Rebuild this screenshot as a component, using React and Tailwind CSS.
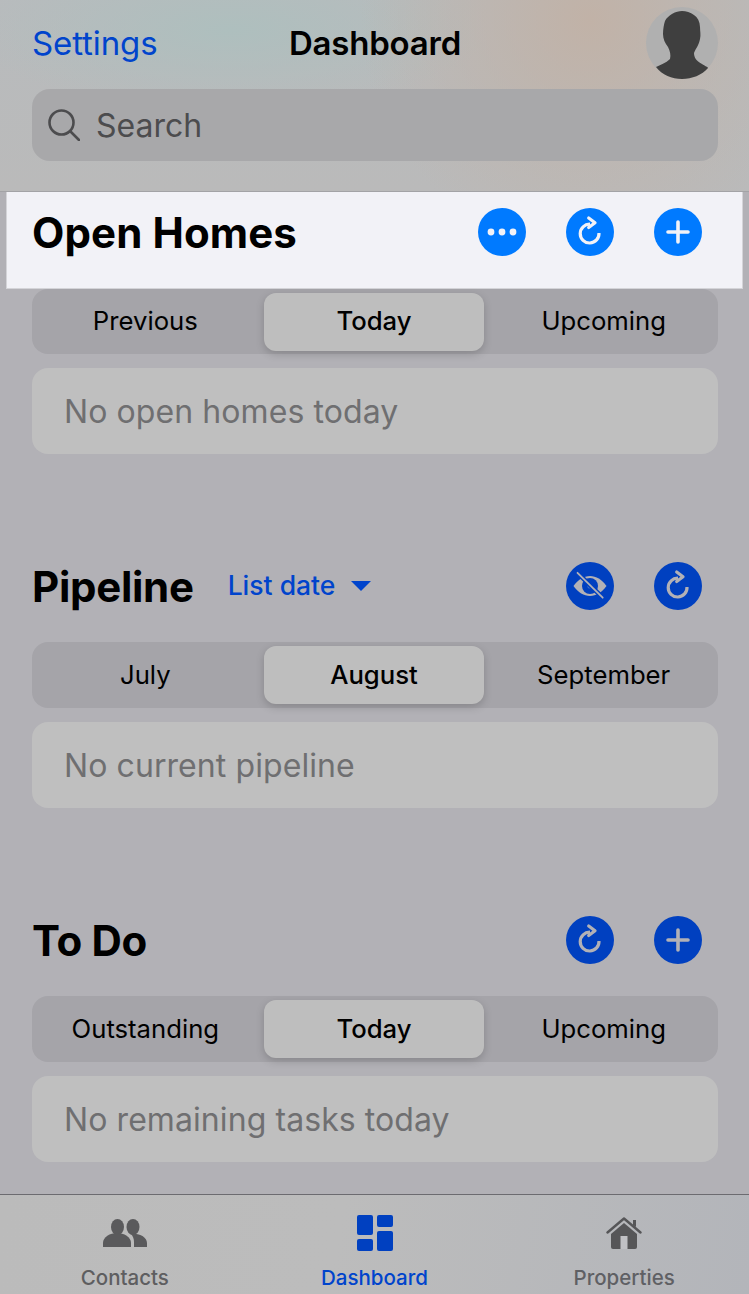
import React from 'react';

const font = { inter: "font-['Inter','Liberation_Sans',sans-serif]" };

function RefreshIcon({ color }) {
  return (
    <svg viewBox="0 0 48 48" className="w-12 h-12" fill="none" stroke={color} strokeWidth="3.2">
      <path d="M24 16.2 A9.4 9.4 0 1 0 33 25" />
      <path d="M22.7 10 L29 14.8 L22.7 19.6" strokeLinecap="round" strokeLinejoin="round" />
    </svg>
  );
}

function PlusIcon({ color }) {
  return (
    <svg viewBox="0 0 48 48" className="w-12 h-12" fill="none" stroke={color} strokeWidth="3.6" strokeLinecap="round">
      <path d="M24 14 V34 M14 24 H34" />
    </svg>
  );
}

function DotsIcon() {
  return (
    <svg viewBox="0 0 48 48" className="w-12 h-12" fill="#f2f2f7">
      <circle cx="13" cy="24" r="3.4" />
      <circle cx="24" cy="24" r="3.4" />
      <circle cx="35" cy="24" r="3.4" />
    </svg>
  );
}

function EyeOffIcon() {
  return (
    <svg viewBox="0 0 48 48" className="w-12 h-12">
      <path d="M7.5 24 C12 17.5 18 14 24 14 C30 14 36 17.5 40.5 24 C36 30.5 30 34 24 34 C18 34 12 30.5 7.5 24 Z" fill="#b2b1b6" />
      <circle cx="24" cy="24" r="8" fill="#0040c0" />
      <circle cx="24" cy="24" r="2.6" fill="#3f6ec4" />
      <path d="M11.5 10.8 L36.7 35.7" stroke="#0040c0" strokeWidth="4.6" />
      <path d="M11.5 10.8 L36.7 35.7" stroke="#b2b1b6" strokeWidth="1.8" strokeLinecap="round" />
    </svg>
  );
}

function Circle({ bg, children }) {
  return <div className={`w-12 h-12 rounded-full overflow-hidden ${bg}`}>{children}</div>;
}

function Segment({ items, height }) {
  return (
    <div className={`ml-8 mr-[31px] ${height} rounded-2xl bg-[#a5a4a9] grid grid-cols-3 items-center`}>
      {items.map((item, i) => (
        <div
          key={item}
          className={
            i === 1
              ? 'ml-[3px] mr-[5px] h-[58px] rounded-xl bg-[#bebebe] shadow-[0_3px_8px_rgba(0,0,0,0.18)] flex items-center justify-center text-[25.7px] font-medium text-black'
              : 'flex items-center justify-center text-[25.7px] font-normal text-black ' + (i === 0 ? 'pr-[2px]' : '')
          }
        >
          {item}
        </div>
      ))}
    </div>
  );
}

function EmptyBox({ text }) {
  return (
    <div className="ml-8 mr-[31px] mt-[14px] h-[86px] rounded-2xl bg-[#bfbfbf] flex items-center pl-[32px] pt-[1px] text-[32px] tracking-[0.08px] text-[#6f6f71]">
      {text}
    </div>
  );
}

function SectionHead({ title, children, extra }) {
  return (
    <div className="h-[96px] pl-8 pr-[47px] pb-4 flex items-center">
      <h2 className="text-[42px] font-bold text-black tracking-[-0.3px]">{title}</h2>
      {extra}
      <div className="ml-auto flex items-center gap-10">{children}</div>
    </div>
  );
}

function TabItem({ label, color, children }) {
  return (
    <div className="flex flex-col items-center pt-[19px]">
      <div className="h-[38px] flex items-center justify-center">{children}</div>
      <span className={`mt-[14px] text-[20.5px] font-medium leading-6 ${color}`}>{label}</span>
    </div>
  );
}

export default function App() {
  return (
    <div className={`w-[749px] h-[1294px] overflow-hidden bg-[#b2b1b6] flex flex-col ${font.inter}`}>
      {/* Nav + search */}
      <header className="h-[192px] shrink-0 border-b border-[#a3a3a6] bg-[radial-gradient(circle_at_590px_20px,#c1b2a7_0,rgba(193,178,167,0)_230px),radial-gradient(ellipse_at_230px_30px,#aebfbe_0,rgba(174,191,190,0)_260px),linear-gradient(180deg,#b8bbbd_0,#bababa_100%)] pt-[7px] pl-8 pr-[31px]">
        <div className="h-[72px] flex items-center">
          <span className="flex-1 pt-[1px] text-[33px] text-[#0044cc] tracking-[-0.1px]">Settings</span>
          <span className="pt-[1px] text-[33px] font-semibold text-black tracking-[-0.2px]">Dashboard</span>
          <div className="flex-1 flex justify-end">
            <svg viewBox="0 0 72 72" className="w-[72px] h-[72px]">
              <circle cx="36" cy="36" r="36" fill="#b0b0b0" />
              <path
                d="M36 4 C44 4 54 9 54 20 C54 24 55 28 54 32 C53 38 50 41 48 46 C48 50 50 54 56 57 C59 59 62 60 62 61 C56 68 46 72 36 72 C26 72 16 68 10 60 C14 58 20 56 24 52 C25 48 24 44 22 40 C19 36 17 32 17 27 C17 22 18 17 19 14 C22 8 30 4 36 4 Z"
                fill="#3f3f3f"
              />
            </svg>
          </div>
        </div>
        <div className="mt-[10px] h-[72px] rounded-[18px] bg-[#a8a8aa] flex items-center pl-4">
          <svg viewBox="0 0 32 32" className="w-8 h-8" fill="none" stroke="#4c4c4e" strokeWidth="2.6" strokeLinecap="round">
            <circle cx="13.5" cy="13.5" r="12" />
            <path d="M22.5 22.5 L31 31" />
          </svg>
          <span className="ml-4 pt-[1px] text-[32px] text-[#4c4c4e]">Search</span>
        </div>
      </header>

      <main className="flex-1 min-h-0">
        {/* Open Homes is highlighted above the dimmed page */}
        <div className="mx-[6px] h-[97px] bg-[#f2f2f7] border border-[#d4d4d8] border-t-0 pl-[26px] pr-[42px] pb-4 flex items-center">
          <h2 className="-ml-[1px] text-[42px] font-bold text-black tracking-[0.1px]">Open Homes</h2>
          <div className="ml-auto -mr-[2px] -mt-[1px] flex items-center gap-10">
            <Circle bg="bg-[#007aff]"><DotsIcon /></Circle>
            <Circle bg="bg-[#007aff]"><RefreshIcon color="#f2f2f7" /></Circle>
            <Circle bg="bg-[#007aff]"><PlusIcon color="#f2f2f7" /></Circle>
          </div>
        </div>
        <Segment items={['Previous', 'Today', 'Upcoming']} height="h-[65px]" />
        <EmptyBox text="No open homes today" />

        <div className="mt-[92px]">
          <SectionHead
            title="Pipeline"
            extra={
              <div className="ml-[34px] flex items-center gap-4 text-[26.5px] font-medium text-[#0044cc]">
                List date
                <svg viewBox="0 0 20 12" className="w-5 h-3" fill="#0044cc">
                  <path d="M0 1 H20 L10 11 Z" />
                </svg>
              </div>
            }
          >
            <Circle bg="bg-[#0040c0]"><EyeOffIcon /></Circle>
            <Circle bg="bg-[#0040c0]"><RefreshIcon color="#b2b1b6" /></Circle>
          </SectionHead>
          <Segment items={['July', 'August', 'September']} height="h-[66px]" />
          <EmptyBox text="No current pipeline" />
        </div>

        <div className="mt-[92px]">
          <SectionHead title="To Do">
            <Circle bg="bg-[#0040c0]"><RefreshIcon color="#b2b1b6" /></Circle>
            <Circle bg="bg-[#0040c0]"><PlusIcon color="#b2b1b6" /></Circle>
          </SectionHead>
          <Segment items={['Outstanding', 'Today', 'Upcoming']} height="h-[66px]" />
          <EmptyBox text="No remaining tasks today" />
        </div>
      </main>

      {/* Tab bar */}
      <nav className="h-[100px] shrink-0 border-t border-[#6c6b70] bg-[linear-gradient(100deg,#bbbbbb_0,#bcbcbc_45%,#b3b5ba_100%)] grid grid-cols-3">
        <TabItem label="Contacts" color="text-[#5e5e60]">
          <svg viewBox="0 0 44 28" className="w-11 h-7" fill="#5a5a5c">
            <ellipse cx="14.5" cy="8" rx="6.5" ry="8" />
            <ellipse cx="30" cy="8" rx="6.5" ry="8" />
            <path d="M0 28 V24 C0 18 7 14 14 14 C21 14 28 18 28 24 V28 Z" />
            <path d="M31 28 V23 C31 20 30 17 28 15 C35 13.5 44 17.5 44 24 V28 Z" />
          </svg>
        </TabItem>
        <TabItem label="Dashboard" color="text-[#0044cc]">
          <div className="ml-[1px] w-9 h-9 flex gap-1">
            <div className="w-4 flex flex-col gap-1">
              <div className="h-5 rounded-[2px] bg-[#0040c0]" />
              <div className="h-3 rounded-[2px] bg-[#0040c0]" />
            </div>
            <div className="w-4 flex flex-col gap-1">
              <div className="h-3 rounded-[2px] bg-[#0040c0]" />
              <div className="h-5 rounded-[2px] bg-[#0040c0]" />
            </div>
          </div>
        </TabItem>
        <TabItem label="Properties" color="text-[#5f6064]">
          <svg viewBox="0 0 36 32" className="w-9 h-8">
            <path d="M1.5 15.5 L18 1.5 L34.5 15.5" fill="none" stroke="#565658" strokeWidth="2.4" strokeLinecap="round" strokeLinejoin="round" />
            <path d="M27 3 H30 V10 L27 8 Z" fill="#565658" />
            <path d="M18 6 L31 17 V30 A2 2 0 0 1 29 32 H7 A2 2 0 0 1 5 30 V17 Z" fill="#565658" />
            <rect x="14.5" y="19" width="7" height="13" fill="#c0c0c4" />
          </svg>
        </TabItem>
      </nav>
    </div>
  );
}
